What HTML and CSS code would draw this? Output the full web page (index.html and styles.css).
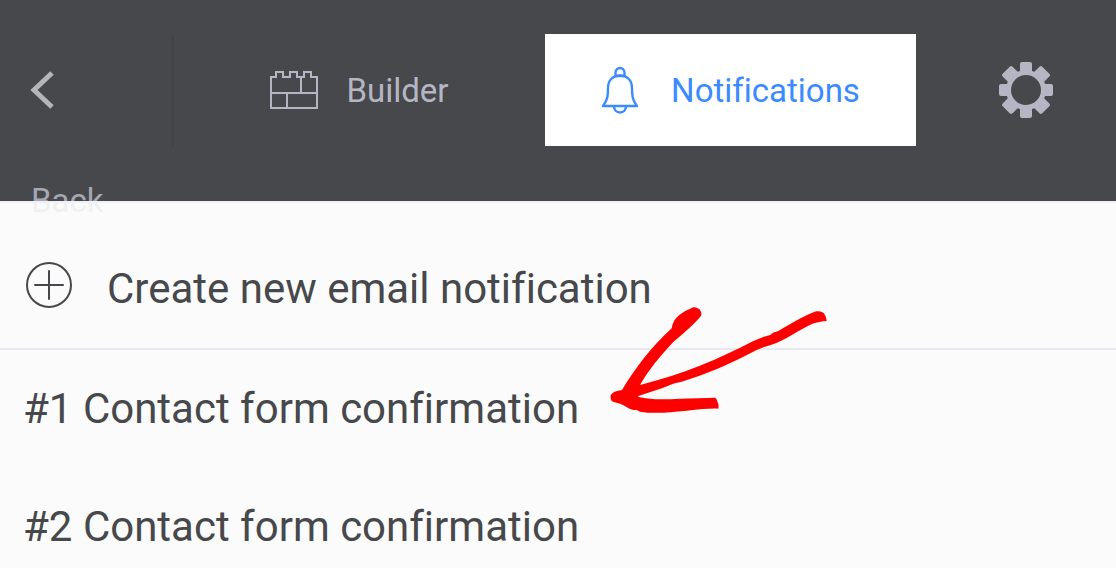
FILE: index.html
```html
<!DOCTYPE html>
<html lang="en">
<head>
    <meta charset="UTF-8">
    <meta name="viewport" content="width=device-width, initial-scale=1.0">
    <title>Notifications</title>
    <link rel="stylesheet" href="styles.css">
</head>
<body>

    <header class="topbar">
        <a class="back" href="#">
            <span class="back-icon">
                <svg width="24" height="40" viewBox="0 0 24 40" aria-hidden="true">
                    <path d="M22 3L4 20l18 17" fill="none" stroke="currentColor" stroke-width="5"/>
                </svg>
            </span>
            <span class="back-label">Back</span>
        </a>

        <nav class="tabs">
            <a class="tab" href="#">
                <svg class="brick" width="48" height="40" viewBox="0 0 48 40" fill="none" stroke="currentColor" stroke-width="2" aria-hidden="true">
                    <path d="M1 38V7h5V2h7v5h7V2h7v5h7V2h7v5h6v31z"/>
                    <path d="M1 23h46M31 7v16M17 23v15"/>
                </svg>
                Builder
            </a>
            <a class="tab active" href="#">
                <svg class="bell" width="38" height="48" viewBox="0 0 38 48" fill="none" stroke="currentColor" stroke-width="2.4" stroke-linejoin="round" aria-hidden="true">
                    <path d="M14.500 10V7c0-3 2-5 4.500-5s4.500 2 4.500 5v3z"/>
                    <path d="M2 40c5-6 5-12 5-18C7 14 12 9.500 19 9.500S31 14 31 22c0 6 0 12 5 18z"/>
                    <path d="M13 40c0 4 2.500 6.500 6 6.500s6-2.500 6-6.500"/>
                </svg>
                Notifications
            </a>
        </nav>

        <button class="settings" type="button" aria-label="Settings">
            <svg width="54" height="56" viewBox="-27 -28 54 56" aria-hidden="true">
                <g fill="currentColor">
                    <rect x="-6" y="-28" width="12" height="56" rx="2"/>
                    <rect x="-27" y="-6" width="54" height="12" rx="2"/>
                    <rect x="-7" y="-28" width="14" height="56" rx="2" transform="rotate(45)"/>
                    <rect x="-7" y="-28" width="14" height="56" rx="2" transform="rotate(-45)"/>
                    <circle r="20"/>
                </g>
                <circle class="gear-hole" r="15"/>
            </svg>
        </button>
    </header>

    <main class="panel">
        <button class="create" type="button">
            <svg width="48" height="48" viewBox="0 0 48 48" fill="none" stroke="currentColor" stroke-width="2" stroke-linecap="round" aria-hidden="true">
                <circle cx="24" cy="24" r="22"/>
                <path d="M24 10v28M10 24h28"/>
            </svg>
            Create new email notification
        </button>

        <ul class="list">
            <li><a href="#">#1 Contact form confirmation</a></li>
            <li><a href="#">#2 Contact form confirmation</a></li>
        </ul>

        <!-- Hand drawn arrow pointing at the first notification -->
        <svg class="arrow" width="260" height="140" viewBox="0 0 780 420" aria-hidden="true">
            <path fill="#f00" d="M62 325C59 311 70 304 96 300C135 235 185 170 245 115C250 82 275 67 310 52C319 50 322 55 328 57C334 64 337 74 331 80C311 104 277 132 250 156C210 199 178 237 150 285C275 254 390 206 490 153Q520 139 543 134C545 128 551 128 566 122C600 103 635 80 674 65C687 62 701 64 706 77Q709 83 710 93C695 94 681 97 668 101C629 118 588 149 545 164C520 171 503 178 475 193C412 226 349 252 275 275C248 280 238 286 218 294L145 318L145 321C185 330 225 328 270 326L375 323C382 326 380 332 384 338Q387 347 385 356C340 354 285 365 220 368Q180 370 150 365L140 360C127 360 118 357 108 350C96 342 84 339 69 335C65 334 63 330 62 325Z"/>
        </svg>
    </main>

</body>
</html>
```

FILE: styles.css
```css
/* Basic Styling */
* {
    box-sizing: border-box;
}

body {
    margin: 0;
    min-height: 100vh;
    display: flex;
    flex-direction: column;
    background-color: #fafafa;
    color: #47484b;
    font-family: Roboto, sans-serif;
    font-variant-ligatures: none;
    overflow: hidden;
}

a {
    color: inherit;
    text-decoration: none;
}

button {
    padding: 0;
    border: none;
    background: none;
    color: inherit;
    font: inherit;
    font-variant-ligatures: none;
    cursor: pointer;
}

svg {
    display: block;
    flex-shrink: 0;
}

/* Top bar */
.topbar {
    display: flex;
    align-items: flex-start;
    padding: 34px 63px 55px 0;
    background-color: #47484b;
    color: #b5b5c3;
    font-size: 33px;
}

.back {
    width: 174px;
    height: 112px;
    flex-shrink: 0;
    border-right: 2px solid #424346;
    color: #b5b6b9;
}

.back-icon {
    display: flex;
    align-items: center;
    height: 112px;
    padding-left: 30px;
}

/* The label hangs below the bar and shows faintly through the panel */
.back-label {
    display: block;
    margin-top: 35px;
    padding-left: 31px;
    line-height: 40px;
    color: #a6a7b4;
}

.tabs {
    display: flex;
    flex: 1;
}

.tab {
    display: flex;
    align-items: center;
    justify-content: center;
    width: 371px;
    height: 112px;
}

.brick {
    margin-right: 28px;
}

.bell {
    margin-right: 32px;
}

.tab.active {
    background-color: #fff;
    color: #3b8aff;
}

.settings {
    display: flex;
    align-items: center;
    height: 112px;
}

.gear-hole {
    fill: #47484b;
}

/* Notification list */
.panel {
    position: relative;
    flex: 1;
    border-top: 2px solid #f0f0f6;
    background-color: rgba(250, 250, 250, 0.88);
    font-size: 42px;
}

.create {
    display: flex;
    align-items: center;
    gap: 34px;
    width: 100%;
    height: 147px;
    padding: 26px 25px 0;
    border-bottom: 2px solid #e8e8f3;
}

.create svg {
    margin-bottom: 8px;
}

.list {
    margin: 0;
    padding: 0;
    list-style: none;
}

.list a {
    display: flex;
    align-items: center;
    height: 118px;
    padding: 0 23px 2px;
}

.arrow {
    position: absolute;
    left: 590px;
    top: 87px;
}
```
